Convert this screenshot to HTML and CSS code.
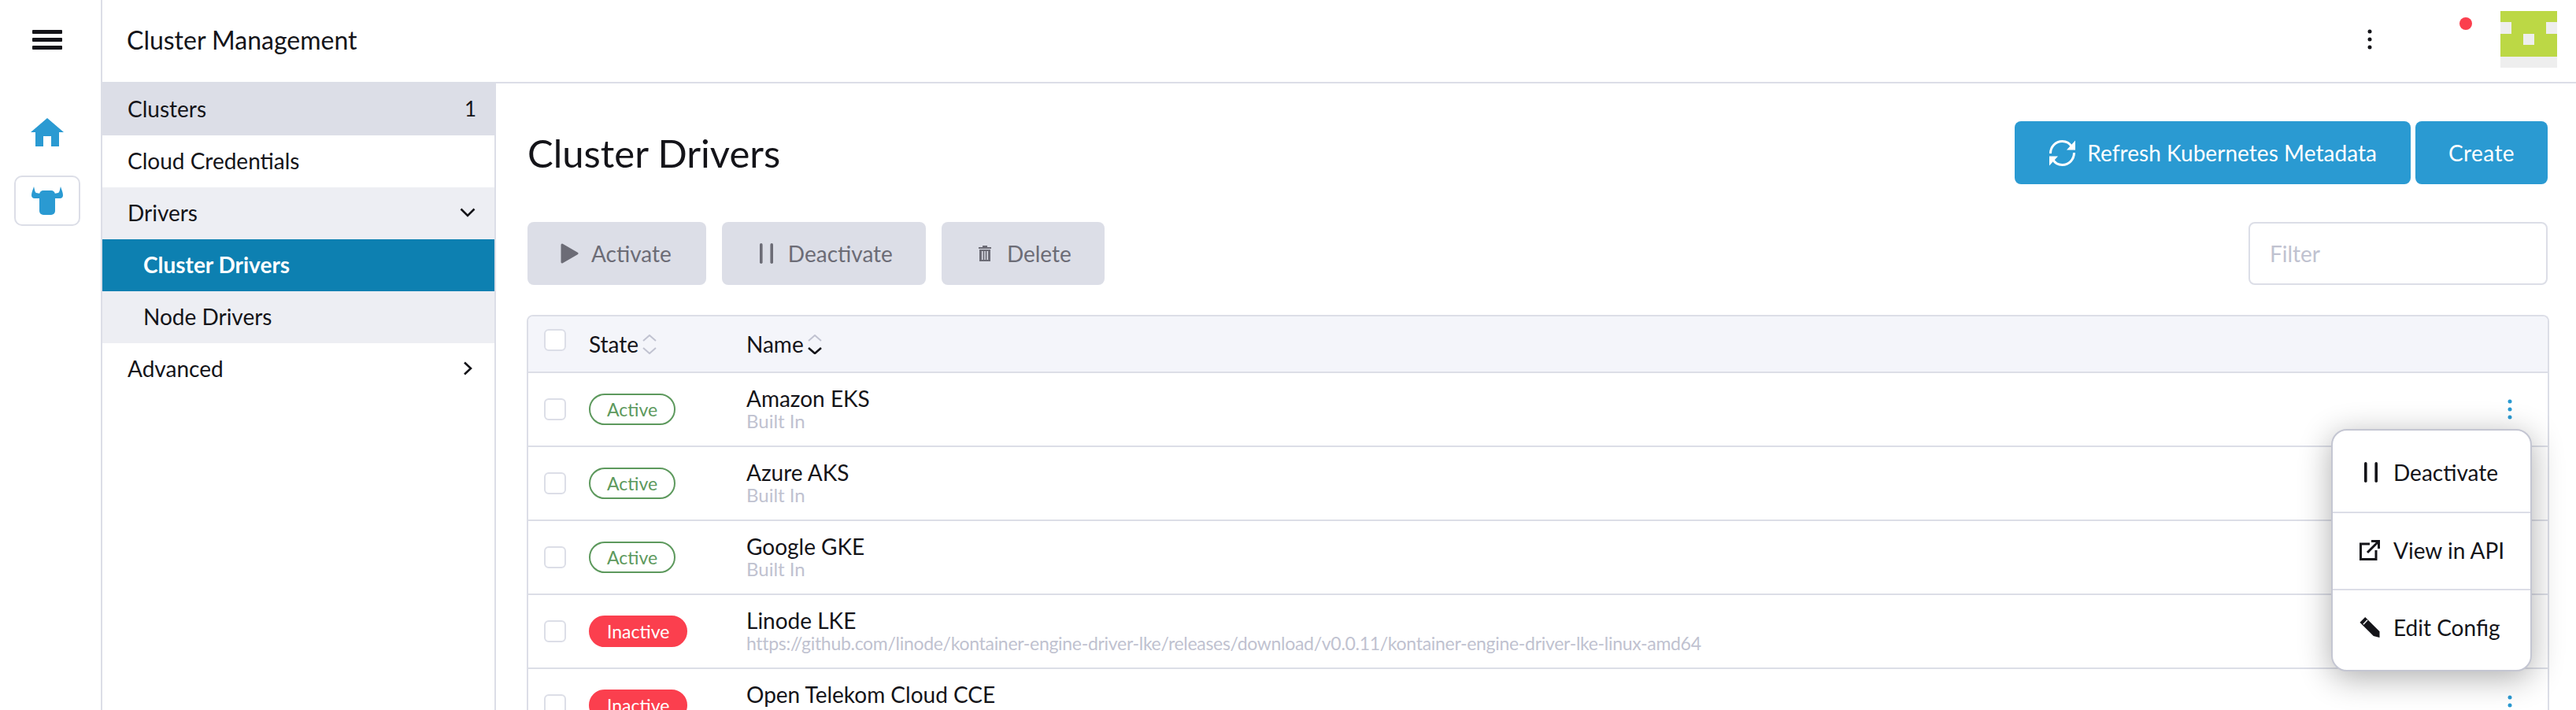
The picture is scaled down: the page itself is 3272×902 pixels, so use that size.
FILE: index.html
```html
<!DOCTYPE html>
<html lang="en">
<head>
<meta charset="utf-8">
<title>Cluster Drivers</title>
<link rel="stylesheet" href="styles.css">
</head>
<body>
<svg class="sprite" width="0" height="0" aria-hidden="true">
  <symbol id="kebab" viewBox="0 0 6 26"><circle cx="3" cy="3" r="2.500"/><circle cx="3" cy="13" r="2.500"/><circle cx="3" cy="23" r="2.500"/></symbol>
  <symbol id="pause" viewBox="0 0 26 26"><rect x="6" y="0" width="3.6" height="26" rx="1.8"/><rect x="19.4" y="0" width="3.6" height="26" rx="1.8"/></symbol>
</svg>
<div class="app">
  <aside class="rail">
    <button class="menu-toggle" aria-label="Menu"><span></span><span></span><span></span></button>
    <svg class="home" viewBox="0 0 42 36"><path d="M21 0 42 18H36V36H26V23H16V36H6V18H0Z"/></svg>
    <div class="cluster-tile">
      <svg class="bull" viewBox="0 0 40 36"><path d="M3 0C4 3 4 7 6 8L11 9V15H4C1 15 0 13 0 11 0 7 2 4 3 0ZM37 0C36 3 36 7 34 8L29 9V15H36C39 15 40 13 40 11 40 7 38 4 37 0Z"/><rect x="10" y="5" width="20" height="31" rx="5"/></svg>
    </div>
  </aside>
  <div class="shell">
    <header class="topbar">
      <h1 class="product">Cluster Management</h1>
      <svg class="top-kebab"><use href="#kebab"/></svg>
      <span class="notice-dot"></span>
      <svg class="avatar" viewBox="0 0 5 5" shape-rendering="crispEdges">
        <rect width="5" height="5" fill="#eeeeee"/>
        <path d="M0 0H5V1H4V2H5V4H0V2H1V1H0ZM2 2V3H3V2Z" fill="#bcd845" fill-rule="evenodd"/>
      </svg>
    </header>
    <div class="body">
      <nav class="sidenav">
        <a class="nav-item selected"><span>Clusters</span><span class="count">1</span></a>
        <a class="nav-item">Cloud Credentials</a>
        <a class="nav-item open"><span>Drivers</span><svg class="chev-down" viewBox="0 0 20 12"><path d="M1.5 1.5 10 10 18.500 1.500"/></svg></a>
        <a class="nav-item sub active">Cluster Drivers</a>
        <a class="nav-item sub open">Node Drivers</a>
        <a class="nav-item"><span>Advanced</span><svg class="chev-right" viewBox="0 0 12 18"><path d="M2 1.500 10 9 2 16.500"/></svg></a>
      </nav>
      <main class="content">
        <div class="title-row">
          <h2 class="page-title">Cluster Drivers</h2>
          <div class="primary-actions">
            <button class="btn primary refresh-btn">
              <svg class="refresh" viewBox="0 0 35 35"><g><path d="M2.500 18C2.500 9.500 9 2.500 17.500 2.500 22.500 2.500 27 5 29.500 9.500"/><path class="head" d="M34 1.500V13.500H23Z"/></g><g transform="rotate(180 17.500 17.500)"><path d="M2.500 18C2.500 9.500 9 2.500 17.500 2.500 22.500 2.500 27 5 29.500 9.500"/><path class="head" d="M34 1.500V13.500H23Z"/></g></svg>
              Refresh Kubernetes Metadata
            </button>
            <button class="btn primary create">Create</button>
          </div>
        </div>
        <div class="bulk-row">
          <button class="btn muted activate"><svg class="ico-play" viewBox="0 0 23 26"><path d="M2 2 21 13 2 24Z"/></svg>Activate</button>
          <button class="btn muted"><svg class="ico-pause"><use href="#pause"/></svg>Deactivate</button>
          <button class="btn muted"><svg class="ico-trash" viewBox="0 0 16 20"><path fill-rule="evenodd" d="M5 0H11V2H16V4H0V2H5ZM1 5H15V20H1ZM4 7V18H5.500V7ZM7.300 7V18H8.700V7ZM10.500 7V18H12V7Z"/></svg>Delete</button>
          <input class="filter" type="text" placeholder="Filter">
        </div>
        <div class="table-wrap">
          <table class="table">
            <colgroup><col class="c-check"><col class="c-state"><col><col class="c-act"></colgroup>
            <thead>
              <tr>
                <th><span class="check head-check"></span></th>
                <th><span class="sortable">State<svg class="sort" viewBox="0 0 18 25"><path d="M1 8 9 1 17 8"/><path d="M1 17 9 24 17 17"/></svg></span></th>
                <th><span class="sortable">Name<svg class="sort" viewBox="0 0 18 25"><path d="M1 8 9 1 17 8"/><path class="on" d="M1 17 9 24 17 17"/></svg></span></th>
                <th></th>
              </tr>
            </thead>
            <tbody>
              <tr><td><span class="check"></span></td><td><span class="badge active-b">Active</span></td><td class="name"><div>Amazon EKS</div><div class="url">Built In</div></td><td><svg class="row-kebab"><use href="#kebab"/></svg></td></tr>
              <tr><td><span class="check"></span></td><td><span class="badge active-b">Active</span></td><td class="name"><div>Azure AKS</div><div class="url">Built In</div></td><td></td></tr>
              <tr><td><span class="check"></span></td><td><span class="badge active-b">Active</span></td><td class="name"><div>Google GKE</div><div class="url">Built In</div></td><td></td></tr>
              <tr><td><span class="check"></span></td><td><span class="badge inactive-b">Inactive</span></td><td class="name"><div>Linode LKE</div><div class="url long">https://github.com/linode/kontainer-engine-driver-lke/releases/download/v0.0.11/kontainer-engine-driver-lke-linux-amd64</div></td><td></td></tr>
              <tr><td><span class="check"></span></td><td><span class="badge inactive-b">Inactive</span></td><td class="name"><div>Open Telekom Cloud CCE</div><div class="url">&nbsp;</div></td><td><svg class="row-kebab"><use href="#kebab"/></svg></td></tr>
            </tbody>
          </table>
        </div>
        <div class="action-menu">
          <a class="menu-item"><svg class="mi"><use href="#pause"/></svg>Deactivate</a>
          <a class="menu-item"><svg class="mi link" viewBox="0 0 26 26"><path d="M13 5H1.500V24.500H21V13"/><path d="M10 16 24 2"/><path d="M15 1.500H24.500V11"/></svg>View in API</a>
          <a class="menu-item"><svg class="mi" viewBox="0 0 26 27"><path fill-rule="evenodd" d="M7 0 0 7 18 25 26 27 26 19ZM9.500 3.500 4 9 5 10 10.500 4.500Z"/></svg>Edit Config</a>
        </div>
      </main>
    </div>
  </div>
</div>
</body>
</html>
```
FILE: styles.css
```css
* { box-sizing: border-box; }
html, body { margin: 0; height: 902px; overflow: hidden; background: #fff; }
body { font-family: Lato, "Noto Sans", sans-serif; font-size: 28px; color: #141419; }
.sprite { position: absolute; }
h1, h2 { margin: 0; font-weight: 400; }

.app { display: flex; height: 902px; }
.rail { width: 130px; flex: none; border-right: 2px solid #dcdee7; display: flex; flex-direction: column; align-items: center; padding-right: 8px; }
.menu-toggle { width: 38px; height: 25px; margin-top: 38px; padding: 0; border: 0; background: none; display: flex; flex-direction: column; justify-content: space-between; }
.menu-toggle span { display: block; height: 5px; background: #141419; border-radius: 1px; }
.home { width: 42px; height: 36px; margin-top: 87px; fill: #2a9ad2; }
.cluster-tile { width: 84px; height: 64px; margin-top: 37px; border: 2px solid #dcdee7; border-radius: 10px; display: flex; align-items: center; justify-content: center; }
.bull { width: 40px; height: 36px; fill: #2a9ad2; }

.shell { flex: 1; min-width: 0; display: flex; flex-direction: column; }
.topbar { height: 106px; flex: none; border-bottom: 2px solid #dcdee7; display: flex; align-items: flex-start; padding: 0 24px 0 31px; }
.product { font-size: 32px; line-height: 102px; margin-right: auto; }
.top-kebab { width: 6px; height: 26px; margin-top: 37px; fill: #141419; }
.notice-dot { width: 16px; height: 16px; margin: 22px 36px 0 111px; border-radius: 50%; background: #fb3f4e; }
.avatar { width: 72px; height: 72px; margin-top: 14px; display: block; }

.body { flex: 1; min-height: 0; display: flex; }
.sidenav { width: 500px; flex: none; border-right: 2px solid #dcdee7; }
.nav-item { height: 66px; display: flex; align-items: center; justify-content: space-between; padding: 0 24px 3px 32px; }
.nav-item.selected { background: #dcdee7; }
.nav-item.open { background: #edeef3; }
.nav-item.sub { padding-left: 52px; }
.nav-item.active { background: #0d80b1; color: #fff; font-weight: 700; }
.count { font-size: 26px; margin-right: -1px; }
.chev-down { width: 20px; height: 12px; fill: none; stroke: #141419; stroke-width: 2.600; }
.chev-right { width: 12px; height: 18px; margin-right: 4px; fill: none; stroke: #141419; stroke-width: 2.600; }

.content { flex: 1; min-width: 0; padding: 48px 36px 0 40px; }
.title-row { display: flex; align-items: center; justify-content: space-between; }
.page-title { font-size: 49px; line-height: 80px; }
.primary-actions { display: flex; gap: 6px; }
.btn { height: 80px; border: 0; border-radius: 8px; padding: 0 42px; font: inherit; display: inline-flex; align-items: center; white-space: nowrap; }
.btn.primary { background: #2a9ad2; color: #fff; }
.btn.refresh-btn { padding: 0 43px; letter-spacing: .05px; }
.btn.create { letter-spacing: .4px; }
.btn.muted { background: #dcdee7; color: #6c6c76; }
.btn.activate { padding-right: 44px; }
.refresh { width: 35px; height: 35px; margin-right: 14px; fill: none; stroke: #fff; stroke-width: 3; }
.refresh .head { fill: #fff; stroke: none; }
.bulk-row { display: flex; gap: 20px; margin-top: 48px; }
.ico-play { width: 23px; height: 26px; margin-right: 16px; fill: #6c6c76; stroke: #6c6c76; stroke-width: 3; stroke-linejoin: round; }
.ico-pause { width: 26px; height: 26px; margin-right: 16px; fill: #6c6c76; }
.ico-trash { width: 16px; height: 20px; margin: 0 20px 0 5px; fill: #6c6c76; }
.filter { width: 380px; height: 80px; margin-left: auto; border: 2px solid #dcdee7; border-radius: 8px; padding: 0 25px; font: inherit; background: #fff; }
.filter::placeholder { color: #c0c2d0; opacity: 1; }

.table-wrap { margin: 38px -2px 0 -1px; border: 2px solid #dcdee7; border-bottom: 0; border-radius: 8px 8px 0 0; overflow: hidden; }
.table { width: 100%; table-layout: fixed; border-collapse: separate; border-spacing: 0; }
.c-check { width: 77px; }
.c-state { width: 200px; }
.c-act { width: 100px; }
.table th, .table td { padding: 0; border-bottom: 2px solid #dcdee7; font-weight: 400; text-align: left; vertical-align: middle; }
.table th { height: 72px; background: #f4f5fa; }
.table td { height: 94px; }
.check { display: block; width: 28px; height: 28px; margin-left: 20px; border: 2px solid #dcdee7; border-radius: 6px; background: #fff; }
.head-check { margin-top: -10px; }
.sortable { display: inline-flex; align-items: center; gap: 5px; }
.sort { width: 18px; height: 25px; fill: none; stroke: #c0c2d0; stroke-width: 2; }
.sort .on { stroke: #141419; stroke-width: 2.600; }
.badge { display: inline-block; height: 40px; line-height: 36px; padding: 0 21px; border: 2px solid; border-radius: 20px; font-size: 23px; }
.active-b { color: #5d995d; border-color: #5d995d; }
.inactive-b { color: #fff; background: #fb3f4e; border-color: #fb3f4e; }
.table td.name { vertical-align: top; padding-top: 15px; line-height: 34px; }
.url { font-size: 24px; line-height: 24px; color: #c0c2d0; white-space: nowrap; }
.url.long { font-size: 23px; letter-spacing: -.3px; }
.row-kebab { display: block; width: 6px; height: 26px; margin-left: 49px; fill: #2a9ad2; }

.action-menu { position: absolute; top: 545px; right: 56px; width: 255px; padding: 5px 0; background: #fff; border: 2px solid #c4c6d2; border-radius: 20px; box-shadow: 0 8px 40px rgba(0, 0, 0, .32); }
.menu-item { height: 98px; display: flex; align-items: center; gap: 17px; padding: 0 0 3px 34px; white-space: nowrap; }
.menu-item + .menu-item { border-top: 2px solid #dcdee7; }
.mi { width: 26px; height: 26px; flex: none; fill: #141419; }
.mi.link { fill: none; stroke: #141419; stroke-width: 3; }
```
